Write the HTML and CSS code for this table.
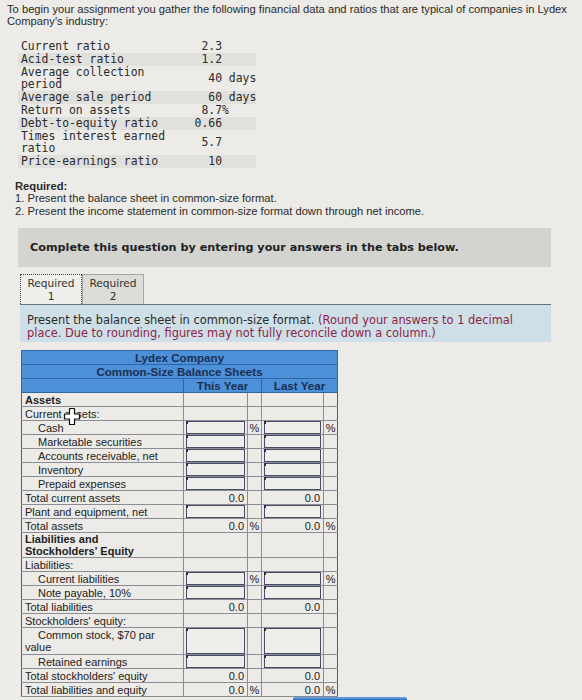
FILE: index.html
```html
<!DOCTYPE html>
<html lang="en">
<head>
<meta charset="utf-8">
<title>Lydex Company</title>
<link rel="stylesheet" href="styles.css">
</head>
<body>
<div class="page">
  <p class="intro">To begin your assignment you gather the following financial data and ratios that are typical of companies in Lydex Company's industry:</p>

  <div class="ratios">
    <div class="r"><span class="lbl">Current ratio</span><span class="num">2.3</span><span class="suf"></span></div>
    <div class="r shade"><span class="lbl">Acid-test ratio</span><span class="num">1.2</span><span class="suf"></span></div>
    <div class="r"><span class="lbl">Average collection period</span><span class="num">40</span><span class="suf"> days</span></div>
    <div class="r shade"><span class="lbl">Average sale period</span><span class="num">60</span><span class="suf"> days</span></div>
    <div class="r"><span class="lbl">Return on assets</span><span class="num">8.7</span><span class="suf">%</span></div>
    <div class="r shade"><span class="lbl">Debt-to-equity ratio</span><span class="num">0.66</span><span class="suf"></span></div>
    <div class="r"><span class="lbl">Times interest earned ratio</span><span class="num">5.7</span><span class="suf"></span></div>
    <div class="r shade"><span class="lbl">Price-earnings ratio</span><span class="num">10</span><span class="suf"></span></div>
  </div>

  <div class="required">
    <p class="req-title">Required:</p>
    <p>1. Present the balance sheet in common-size format.</p>
    <p>2. Present the income statement in common-size format down through net income.</p>
  </div>

  <div class="complete">Complete this question by entering your answers in the tabs below.</div>

  <div class="tabs">
    <div class="tab active">Required<br>1</div>
    <div class="tab">Required<br>2</div>
  </div>
  <div class="panel">Present the balance sheet in common-size format. <span class="note">(Round your answers to 1 decimal place. Due to rounding, figures may not fully reconcile down a column.)</span></div>

  <div class="sheet">
    <table class="bs">
      <colgroup>
        <col class="c-lbl"><col class="c-val"><col class="c-pct"><col class="c-val2"><col class="c-pct">
      </colgroup>
      <thead>
        <tr class="h1"><th colspan="5">Lydex Company</th></tr>
        <tr class="h2"><th colspan="5">Common-Size Balance Sheets</th></tr>
        <tr class="h3"><th></th><th colspan="2">This Year</th><th colspan="2">Last Year</th></tr>
      </thead>
      <tbody>
        <tr><td class="lbl b">Assets</td><td></td><td></td><td></td><td></td></tr>
        <tr><td class="lbl">Current assets:</td><td></td><td></td><td></td><td></td></tr>
        <tr><td class="lbl ind">Cash</td><td class="in"><span class="box"></span></td><td class="pct">%</td><td class="in"><span class="box"></span></td><td class="pct">%</td></tr>
        <tr><td class="lbl ind">Marketable securities</td><td class="in"><span class="box"></span></td><td></td><td class="in"><span class="box"></span></td><td></td></tr>
        <tr><td class="lbl ind">Accounts receivable, net</td><td class="in"><span class="box"></span></td><td></td><td class="in"><span class="box"></span></td><td></td></tr>
        <tr><td class="lbl ind">Inventory</td><td class="in"><span class="box"></span></td><td></td><td class="in"><span class="box"></span></td><td></td></tr>
        <tr><td class="lbl ind">Prepaid expenses</td><td class="in"><span class="box"></span></td><td></td><td class="in"><span class="box"></span></td><td></td></tr>
        <tr><td class="lbl">Total current assets</td><td class="tot">0.0</td><td></td><td class="tot">0.0</td><td></td></tr>
        <tr><td class="lbl">Plant and equipment, net</td><td class="in"><span class="box"></span></td><td></td><td class="in"><span class="box"></span></td><td></td></tr>
        <tr><td class="lbl">Total assets</td><td class="tot">0.0</td><td class="pct">%</td><td class="tot">0.0</td><td class="pct">%</td></tr>
        <tr><td class="lbl b">Liabilities and<br>Stockholders' Equity</td><td></td><td></td><td></td><td></td></tr>
        <tr><td class="lbl">Liabilities:</td><td></td><td></td><td></td><td></td></tr>
        <tr><td class="lbl ind">Current liabilities</td><td class="in"><span class="box"></span></td><td class="pct">%</td><td class="in"><span class="box"></span></td><td class="pct">%</td></tr>
        <tr><td class="lbl ind">Note payable, 10%</td><td class="in"><span class="box"></span></td><td></td><td class="in"><span class="box"></span></td><td></td></tr>
        <tr><td class="lbl">Total liabilities</td><td class="tot">0.0</td><td></td><td class="tot">0.0</td><td></td></tr>
        <tr><td class="lbl">Stockholders' equity:</td><td></td><td></td><td></td><td></td></tr>
        <tr><td class="lbl ind">Common stock, $70 par value</td><td class="in"><span class="box tall"></span></td><td></td><td class="in"><span class="box tall"></span></td><td></td></tr>
        <tr><td class="lbl ind">Retained earnings</td><td class="in"><span class="box"></span></td><td></td><td class="in"><span class="box"></span></td><td></td></tr>
        <tr><td class="lbl">Total stockholders' equity</td><td class="tot">0.0</td><td></td><td class="tot">0.0</td><td></td></tr>
        <tr><td class="lbl">Total liabilities and equity</td><td class="tot">0.0</td><td class="pct">%</td><td class="tot">0.0</td><td class="pct">%</td></tr>
      </tbody>
    </table>
    <svg class="cursor" width="18" height="19" viewBox="0 0 18 19" aria-hidden="true">
      <path d="M6.5 1.5h5v5.5h5v5h-5v5.5h-5v-5.5h-5v-5h5z" fill="#ffffff" stroke="#111111" stroke-width="1.2" stroke-linejoin="round"/>
    </svg>
  </div>
  <div class="nav"><span class="nav-btn"></span></div>
</div>
</body>
</html>
```

FILE: styles.css
```css
html, body {
  margin: 0;
  padding: 0;
  background: #ecebe7;
}

.page {
  padding: 3px 7px 0 7px;
  font-family: "Liberation Sans", Arial, sans-serif;
  color: #2a2a2a;
  position: relative;
}

p { margin: 0; }

.intro {
  font-size: 11.2px;
  line-height: 12px;
  width: 572px;
}

/* ratio list */
.ratios {
  margin: 13px 0 0 11px;
  width: 238px;
  font-family: "DejaVu Sans Mono", "Liberation Mono", monospace;
  font-size: 11.4px;
  line-height: 12.8px;
  color: #2b2b2b;
}
.r {
  display: grid;
  grid-template-columns: 157px 47px 34px;
  align-items: center;
}
.r.shade { background: #e0e0dc; }
.r .lbl { padding-left: 3px; }
.r .num { text-align: right; }
.r .suf { white-space: pre; }

/* required */
.required {
  margin: 12px 0 0 8px;
  font-size: 11.2px;
  line-height: 12.5px;
  color: #2a2a2a;
}
.req-title { font-weight: bold; }

.complete {
  margin: 11px 0 0 11px;
  width: 521px;
  height: 39px;
  padding-left: 12px;
  box-sizing: content-box;
  background: #d3d3cf;
  font-family: "DejaVu Sans", Verdana, sans-serif;
  font-weight: bold;
  font-size: 11.2px;
  line-height: 39px;
  color: #222;
}

/* tabs */
.tabs {
  display: flex;
  margin: 7px 0 0 13px;
}
.tab {
  width: 62px;
  height: 30px;
  box-sizing: border-box;
  padding-top: 2px;
  text-align: center;
  font-family: "DejaVu Sans", Verdana, sans-serif;
  font-size: 10.6px;
  line-height: 13px;
  color: #333;
  background: #dcdcd8;
  border: 1px solid #a6a6a6;
  border-bottom: none;
}
.tab.active {
  background: #efefeb;
  border: 1px dotted #444;
  border-bottom: none;
}

.panel {
  margin-left: 13px;
  width: 531px;
  box-sizing: border-box;
  padding: 9px 7px 3px 7px;
  background: #cfdfe8;
  border-top: 1px solid #69737a;
  font-family: "DejaVu Sans", Verdana, sans-serif;
  font-size: 11.4px;
  line-height: 12.5px;
  color: #2b2b2b;
}
.panel .note { color: #8e2445; }

/* balance sheet */
.sheet {
  position: relative;
  margin: 8px 0 0 14px;
  width: 317px;
}
.bs {
  border-collapse: collapse;
  table-layout: fixed;
  width: 317px;
  font-family: "Liberation Sans", Arial, sans-serif;
  font-size: 11px;
  color: #222;
}
.c-lbl { width: 162px; }
.c-val { width: 64px; }
.c-val2 { width: 62px; }
.c-pct { width: 14px; }

.bs th {
  background: #4b90d8;
  color: #1d2f52;
  font-size: 11.6px;
  font-weight: bold;
  line-height: 12px;
  height: 13px;
  padding: 0;
  border: 1px solid #3266a2;
}

.bs td {
  border: 1px solid #8c8d94;
  height: 13px;
  padding: 0 2px;
  line-height: 12px;
  white-space: nowrap;
}
.bs td.lbl {
  white-space: normal;
  padding-left: 3px;
  border-left: 1px solid #555a66;
}
.bs td.lbl.b { font-weight: bold; }
.bs td.lbl.ind { text-indent: 13px; }
.bs tr td:last-child { border-right: 1px solid #555a66; }
.bs td.pct { text-align: center; padding: 0; }
.bs td.tot { text-align: right; padding-right: 3px; }
.bs td.in { padding: 0 2px 0 2px; }

.box {
  display: block;
  position: relative;
  height: 11px;
  border: 1px solid #474c68;
  background: #eeeeeb;
}
.box::before {
  content: "";
  position: absolute;
  left: -1px;
  top: -1px;
  width: 2px;
  height: 3px;
  background: #2a2f4a;
}
.box.tall { height: 24px; }

.cursor {
  position: absolute;
  left: 42px;
  top: 57px;
}

.nav {
  display: flex;
  margin: 0 0 0 286px;
}
.nav-btn {
  display: block;
  width: 114px;
  height: 14px;
  background: #2f72b8;
  border-top: 2px solid #5a9be0;
  border-radius: 2px 2px 0 0;
}
```
